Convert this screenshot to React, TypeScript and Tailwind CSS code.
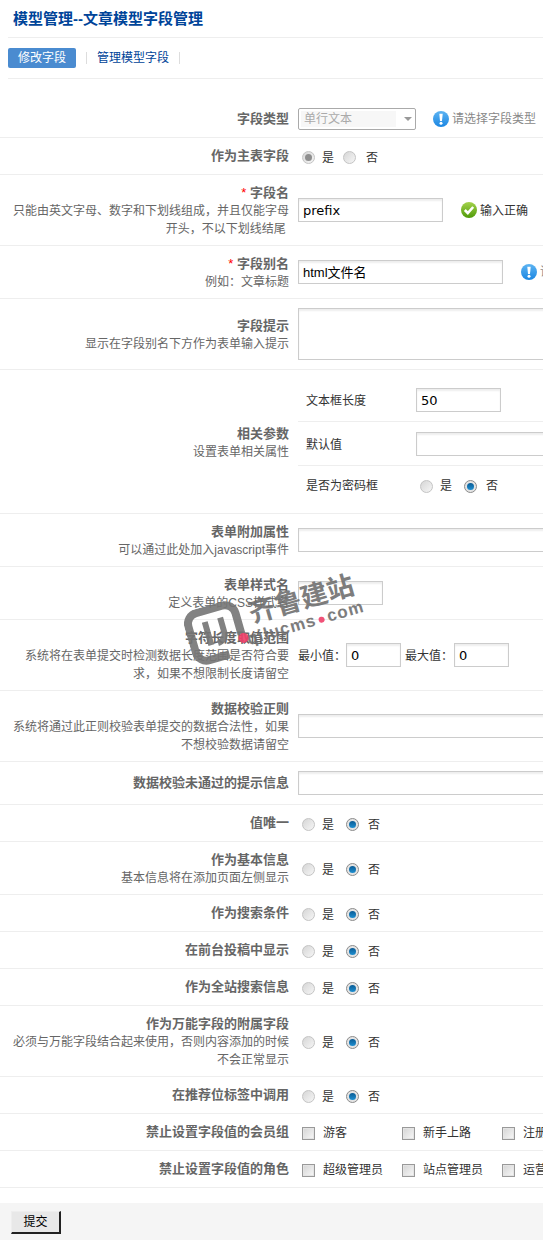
import React from 'react'

function Radio({ checked, dim }: { checked?: boolean; dim?: boolean }) {
  if (checked && !dim) {
    return (
      <span className="flex h-[13px] w-[13px] shrink-0 items-center justify-center rounded-full border border-[#8c8c8c] bg-[#e4e4e4]">
        <span className="h-[7px] w-[7px] rounded-full bg-gradient-to-b from-[#0a5c96] to-[#1f8fd0]" />
      </span>
    )
  }
  return (
    <span className="flex h-[13px] w-[13px] shrink-0 items-center justify-center rounded-full border border-[#c4c4c4] bg-gradient-to-br from-[#d6d6d6] to-[#f6f6f6]">
      {checked && <span className="h-[7px] w-[7px] rounded-full bg-[#8e8e8e]" />}
    </span>
  )
}

function YesNo({ yes, tight }: { yes?: boolean; tight?: boolean }) {
  return (
    <div className="ml-1 mt-[3px] flex items-center text-[#333]">
      <Radio checked={yes} dim={tight} />
      <span className="ml-[7px]">是</span>
      <span className={tight ? 'ml-[9px]' : 'ml-3'}>
        <Radio checked={!yes && !tight} />
      </span>
      <span className={tight ? 'ml-[10px]' : 'ml-[9px]'}>否</span>
    </div>
  )
}

function Check({ label }: { label: string }) {
  return (
    <div className="ml-1 mt-[2px] flex w-[96px] shrink-0 items-center text-[#333]">
      <span className="h-[13px] w-[13px] shrink-0 border border-[#999] bg-gradient-to-br from-[#d4d4d4] to-[#f8f8f8] shadow-[inset_0_0_0_1px_#e4e4e4]" />
      <span className="ml-[8px] whitespace-nowrap">{label}</span>
    </div>
  )
}

function Input({ className }: { className: string }) {
  return (
    <div className={`h-6 shrink-0 border border-[#ccc] bg-white shadow-[inset_0_2px_2px_#eee] ${className}`} />
  )
}

function InputText({ className, value }: { className: string; value: string }) {
  return (
    <div
      className={`flex h-6 shrink-0 items-center border border-[#ccc] bg-white pl-1 pt-[2px] text-[13px] text-black shadow-[inset_0_2px_2px_#eee] ${className}`}
    >
      {value}
    </div>
  )
}

function InfoIcon() {
  return (
    <svg width="16" height="16" viewBox="0 0 16 16" className="shrink-0">
      <defs>
        <linearGradient id="infoFill" x1="0" y1="0" x2="0" y2="1">
          <stop offset="0" stopColor="#5db4f2" />
          <stop offset="1" stopColor="#1b86e2" />
        </linearGradient>
      </defs>
      <circle cx="8" cy="8" r="8" fill="url(#infoFill)" />
      <path d="M6.3 2.8h3.4L9 10H7z" fill="#fff" />
      <circle cx="8" cy="12.3" r="1.5" fill="#fff" />
    </svg>
  )
}

function OkIcon() {
  return (
    <svg width="16" height="16" viewBox="0 0 16 16" className="shrink-0">
      <defs>
        <linearGradient id="okFill" x1="0" y1="0" x2="0" y2="1">
          <stop offset="0" stopColor="#a4d24c" />
          <stop offset="1" stopColor="#4f9a08" />
        </linearGradient>
      </defs>
      <circle cx="8" cy="8" r="8" fill="url(#okFill)" />
      <path d="M3.8 8l3 3 5.4-6" fill="none" stroke="#fff" strokeWidth="2.6" />
    </svg>
  )
}

function Row({
  label,
  desc,
  required,
  height,
  children,
}: {
  label: string
  desc?: React.ReactNode
  required?: boolean
  height?: string
  children: React.ReactNode
}) {
  return (
    <div className={`flex items-center border-b border-[#eee] ${height ?? 'min-h-[37px]'}`}>
      <div className={`w-[289px] shrink-0 text-right leading-[18px] text-[#666] ${desc ? 'pb-[7px] pt-[9px]' : 'pb-[8px] pt-[8px]'}`}>
        <div className="text-[13px] font-bold">
          {required && <span className="font-normal text-[#f00]">* </span>}
          {label}
        </div>
        {desc && <div>{desc}</div>}
      </div>
      <div className="ml-[9px] flex min-w-0 flex-1 items-center whitespace-nowrap">{children}</div>
    </div>
  )
}

function Watermark() {
  return (
    <div className="pointer-events-none absolute left-[185px] top-[589px] flex h-[56px] w-[176px] -rotate-[16deg] items-center opacity-90">
      <div className="relative shrink-0">
        <svg width="58" height="58" viewBox="0 0 58 58">
          <path
            d="M36 53H15a11 11 0 0 1-11-11V15A11 11 0 0 1 15 4h27a11 11 0 0 1 11 11v22"
            fill="none"
            stroke="#757575"
            strokeWidth="8"
          />
          <path d="M21 15v24M37 15v15a9 9 0 0 1-9 9" fill="none" stroke="#757575" strokeWidth="6" />
        </svg>
        <span className="absolute bottom-[12px] right-[-1px] h-[10px] w-[10px] rounded-full bg-[#f0406a]" />
      </div>
      <div className="-ml-[1px] whitespace-nowrap font-bold leading-none text-[#707070]">
        <div className="ml-[9px] text-[27px]">齐鲁建站</div>
        <div className="mt-[1px] flex items-center text-[17px] tracking-[1px]">
          qilucms
          <span className="mx-[3px] mt-1 h-[6px] w-[6px] rounded-full bg-[#f0406a]" />
          com
        </div>
      </div>
    </div>
  )
}

export default function App() {
  return (
    <div className="relative h-[1240px] w-[543px] overflow-hidden bg-white text-xs [font-family:'Liberation_Sans','Noto_Sans_CJK_SC',sans-serif]">
      <div className="ml-2 flex h-[38px] items-center border-b border-[#eee] pl-[5px] pt-[1px] text-[15px] font-bold text-[#004499]">
        模型管理--文章模型字段管理
      </div>
      <div className="ml-2 flex h-[41px] items-center border-b border-[#eee] pb-[1px]">
        <div className="flex h-5 w-[68px] items-center justify-center rounded-[2px] bg-[#4a8bd0] text-[#fff]">修改字段</div>
        <span className="ml-[10px] h-[12px] w-px bg-[#ddd]" />
        <span className="ml-[10px] text-[#004499]">管理模型字段</span>
        <span className="ml-[10px] h-[12px] w-px bg-[#ddd]" />
      </div>
      <div className="h-[21px]" />

      <Row label="字段类型" height="h-[38px]">
        <div className="flex h-[22px] w-[118px] items-center rounded-[2px] border border-[#aaa] px-[2px] text-[#aaa]">
          <span className="flex h-4 w-[95px] items-center bg-[#f7f7f7] pl-[3px]">单行文本</span>
          <span className="ml-[8px] h-0 w-0 border-x-[4px] border-t-[4px] border-x-transparent border-t-[#999]" />
        </div>
        <span className="ml-[17px]"><InfoIcon /></span>
        <span className="ml-[3px] text-[#888]">请选择字段类型</span>
      </Row>
      <Row label="作为主表字段">
        <YesNo yes tight />
      </Row>
      <Row
        required
        label="字段名"
        desc={
          <>
            只能由英文字母、数字和下划线组成，并且仅能字母
            <br />
            开头，不以下划线结尾&nbsp;
          </>
        }
      >
        <InputText className="w-[145px] [font-family:'DejaVu_Sans']" value="prefix" />
        <span className="ml-[18px]"><OkIcon /></span>
        <span className="ml-[3px] pt-[2px] text-[#333]">输入正确</span>
      </Row>
      <Row required label="字段别名" desc="例如：文章标题">
        <InputText className="w-[205px]" value="html文件名" />
        <span className="ml-[18px]"><InfoIcon /></span>
        <span className="ml-[3px] text-[#888]">请输入字段别名</span>
      </Row>
      <Row label="字段提示" desc="显示在字段别名下方作为表单输入提示" height="h-[71px]">
        <div className="h-[52px] w-[400px] shrink-0 border border-[#ccc] shadow-[inset_0_2px_2px_#eee]" />
      </Row>
      <div className="flex h-[144px] items-center border-b border-[#eee]">
        <div className="w-[289px] shrink-0 pt-[2px] text-right leading-[18px] text-[#666]">
          <div className="text-[13px] font-bold">相关参数</div>
          <div>设置表单相关属性</div>
        </div>
        <div className="ml-[9px] flex-1 self-stretch text-[#333]">
          <div className="flex items-center border-b border-[#eee] pb-[9px] pt-[18px]">
            <span className="w-[118px] pl-2 pt-[2px]">文本框长度</span>
            <InputText className="w-[85px] [font-family:'DejaVu_Sans']" value="50" />
          </div>
          <div className="flex items-center border-b border-[#eee] pb-[9px] pt-[10px]">
            <span className="w-[118px] pl-2 pt-[2px]">默认值</span>
            <Input className="w-[300px]" />
          </div>
          <div className="flex items-center pt-[9px]">
            <span className="w-[118px] pl-2 pt-[2px]">是否为密码框</span>
            <YesNo />
          </div>
        </div>
      </div>
      <Row label="表单附加属性" desc="可以通过此处加入javascript事件">
        <Input className="w-[400px]" />
      </Row>
      <Row label="表单样式名" desc="定义表单的CSS样式名">
        <Input className="w-[85px]" />
      </Row>
      <Row
        label="字符长度取值范围"
        desc={
          <>
            系统将在表单提交时检测数据长度范围是否符合要
            <br />
            求，如果不想限制长度请留空
          </>
        }
      >
        <span className="pt-[2px] text-[#333]">最小值：</span>
        <InputText className="w-[55px] [font-family:'DejaVu_Sans']" value="0" />
        <span className="ml-1 mr-px pt-[2px] text-[#333]">最大值：</span>
        <InputText className="w-[55px] [font-family:'DejaVu_Sans']" value="0" />
      </Row>
      <Row
        label="数据校验正则"
        desc={
          <>
            系统将通过此正则校验表单提交的数据合法性，如果
            <br />
            不想校验数据请留空
          </>
        }
      >
        <Input className="w-[400px]" />
      </Row>
      <Row label="数据校验未通过的提示信息" height="h-[43px]">
        <Input className="w-[400px]" />
      </Row>
      <Row label="值唯一">
        <YesNo />
      </Row>
      <Row label="作为基本信息" desc="基本信息将在添加页面左侧显示">
        <YesNo />
      </Row>
      <Row label="作为搜索条件">
        <YesNo />
      </Row>
      <Row label="在前台投稿中显示">
        <YesNo />
      </Row>
      <Row label="作为全站搜索信息">
        <YesNo />
      </Row>
      <Row
        label="作为万能字段的附属字段"
        desc={
          <>
            必须与万能字段结合起来使用，否则内容添加的时候
            <br />
            不会正常显示
          </>
        }
      >
        <YesNo />
      </Row>
      <Row label="在推荐位标签中调用">
        <YesNo />
      </Row>
      <Row label="禁止设置字段值的会员组">
        <Check label="游客" />
        <Check label="新手上路" />
        <Check label="注册会员" />
      </Row>
      <Row label="禁止设置字段值的角色">
        <Check label="超级管理员" />
        <Check label="站点管理员" />
        <Check label="运营总监" />
      </Row>

      <div className="mt-[15px] h-[37px] bg-[#f5f5f5] pl-[11px] pt-2">
        <button className="flex h-[23px] w-[50px] items-center justify-center border border-b-2 border-r-2 border-[#eee] border-b-[#222] border-r-[#222] bg-[#e8e8e8] text-[#000]">
          提交
        </button>
      </div>

      <Watermark />
    </div>
  )
}
